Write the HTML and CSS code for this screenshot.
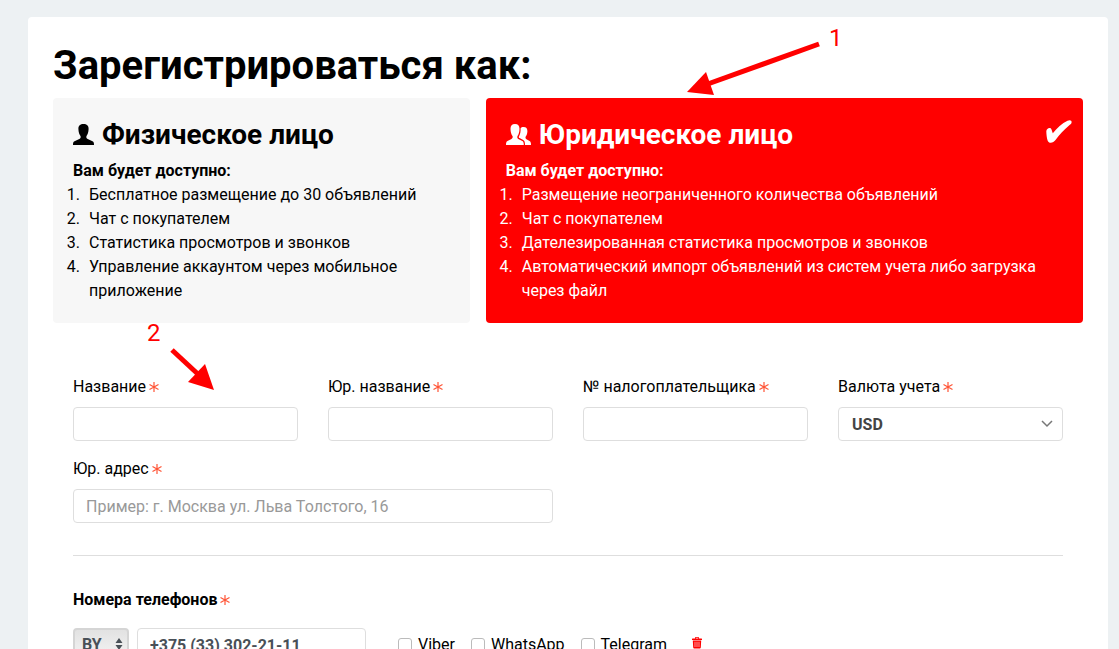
FILE: index.html
```html
<!DOCTYPE html>
<html lang="ru">
  <head>
    <meta charset="UTF-8" />
    <meta name="viewport" content="width=device-width, initial-scale=1.0" />
    <title>Регистрация</title>
    <link rel="stylesheet" href="styles.css">
  </head>
  <body>
    <form class="panel">
      <h1>Зарегистрироваться как:</h1>

      <div class="types">
        <section class="card">
          <input class="card-radio" type="radio" name="type" id="person" />
          <h2>
            <svg class="card-icon" width="21" height="22" viewBox="0 0 21 22">
              <path d="M10.500 0C7.200 0 5.300 1.500 5.400 5C5.500 8.500 6.400 10.500 7.500 12C8 13.500 7.500 14.300 6.300 14.900L1.500 17.300C.3 18 0 18.800 0 21H21C21 18.800 20.700 18 19.500 17.300L14.700 14.900C13.500 14.300 13 13.500 13.500 12C14.600 10.500 15.500 8.500 15.600 5C15.700 1.500 13.800 0 10.500 0Z" />
            </svg>
            <label for="person">Физическое лицо</label>
          </h2>
          <strong>Вам будет доступно:</strong>
          <ol>
            <li>Бесплатное размещение до 30 объявлений</li>
            <li>Чат с покупателем</li>
            <li>Статистика просмотров и звонков</li>
            <li>Управление аккаунтом через мобильное приложение</li>
          </ol>
        </section>

        <section class="card card-active">
          <input class="card-radio" type="radio" name="type" id="company" checked />
          <h2>
            <svg class="card-icon" width="25" height="22" viewBox="0 0 25 22">
              <path d="M9 0C5.800 0 4.400 1.700 4.500 5C4.600 8.200 5.300 10.300 6.500 12C7 13.500 6.500 14.300 5.500 14.900L1.500 17C.3 17.700 0 18.800 0 21H17.800C17.800 18.800 17.500 17.700 16.300 17L12.300 14.900C11.300 14.300 11 13.500 11.500 12C12.700 10.300 13.400 8.200 13.500 5C13.600 1.700 12.200 0 9 0Z" />
              <path d="M17.500 3C16.100 3 15.200 3.400 14.600 4.200C14.800 7.800 14.100 10.300 12.900 12.400C12.700 13.300 12.900 13.700 13.600 14.100L17.200 16C18.600 16.800 19 18.300 19 21H25C25 18.800 24.700 17.700 23.500 17L20.500 15.300C19.500 14.700 19.200 13.900 19.700 12.600C20.800 11 21.300 9.500 21.400 7.200C21.500 4.500 20.200 3 17.500 3Z" />
            </svg>
            <label for="company">Юридическое лицо</label>
            <svg class="card-check" width="26" height="24" viewBox="0 0 26 24">
              <path d="M.3 11.500C.2 8.500 4.300 6.800 5.400 9.300L6.800 13.200C11 8 16 3.500 21.500 .8C24 -.4 25.700 .4 25.600 2.200C25.500 3.600 24.600 4.200 23.300 5.300C18 9.800 13.500 14.500 9.500 20C7.500 22.800 3 24.200 1.600 20.400C.8 18 .4 14.500 .3 11.500Z" />
            </svg>
          </h2>
          <strong>Вам будет доступно:</strong>
          <ol>
            <li>Размещение неограниченного количества объявлений</li>
            <li>Чат с покупателем</li>
            <li>Дателезированная статистика просмотров и звонков</li>
            <li>Автоматический импорт объявлений из систем учета либо загрузка через файл</li>
          </ol>
        </section>
      </div>

      <div class="fields">
        <div class="field">
          <label for="name">Название <svg class="required" viewBox="0 0 10 10"><path d="M5 0V10M.5 2.500L9.500 7.500M9.500 2.500L.5 7.500" /></svg></label>
          <input class="control" type="text" id="name" />
        </div>
        <div class="field">
          <label for="legal-name">Юр. название <svg class="required" viewBox="0 0 10 10"><path d="M5 0V10M.5 2.500L9.500 7.500M9.500 2.500L.5 7.500" /></svg></label>
          <input class="control" type="text" id="legal-name" />
        </div>
        <div class="field">
          <label for="tax">№ налогоплательщика <svg class="required" viewBox="0 0 10 10"><path d="M5 0V10M.5 2.500L9.500 7.500M9.500 2.500L.5 7.500" /></svg></label>
          <input class="control" type="text" id="tax" />
        </div>
        <div class="field">
          <label for="currency">Валюта учета <svg class="required" viewBox="0 0 10 10"><path d="M5 0V10M.5 2.500L9.500 7.500M9.500 2.500L.5 7.500" /></svg></label>
          <div class="select">
            <select class="control" id="currency">
              <option>USD</option>
            </select>
            <svg class="chevron" width="12" height="8" viewBox="0 0 12 8"><path d="M1 1L6 6L11 1" /></svg>
          </div>
        </div>
        <div class="field field-wide">
          <label for="address">Юр. адрес <svg class="required" viewBox="0 0 10 10"><path d="M5 0V10M.5 2.500L9.500 7.500M9.500 2.500L.5 7.500" /></svg></label>
          <input class="control" type="text" id="address" placeholder="Пример: г. Москва ул. Льва Толстого, 16" />
        </div>
      </div>

      <div class="phones">
        <label class="phones-title" for="phone">Номера телефонов <svg class="required" viewBox="0 0 10 10"><path d="M5 0V10M.5 2.500L9.500 7.500M9.500 2.500L.5 7.500" /></svg></label>
        <div class="phone-row">
          <div class="select">
            <select class="control country" aria-label="Страна">
              <option>BY</option>
            </select>
            <svg class="sorter" width="8" height="12" viewBox="0 0 8 12"><path d="M4 0L7.500 5H.5ZM4 12L7.500 7H.5Z" /></svg>
          </div>
          <input class="control phone" type="tel" id="phone" value="+375 (33) 302-21-11" />
          <div class="messengers">
            <label><input type="checkbox" /> Viber</label>
            <label><input type="checkbox" /> WhatsApp</label>
            <label><input type="checkbox" /> Telegram</label>
            <button class="remove" type="button" aria-label="Удалить">
              <svg width="10" height="12" viewBox="0 0 10 12">
                <path fill-rule="evenodd" d="M3 1.500V.8Q3 0 3.800 0H6.200Q7 0 7 .8V1.500H9.500Q10 1.500 10 2V3H0V2Q0 1.500 .5 1.500ZM3.800 1.500H6.200V.8H3.800ZM.8 3.600H9.200L8.800 10.500Q8.700 11.500 7.800 11.500H2.200Q1.300 11.500 1.200 10.500ZM2.700 4.800V10H3.300V4.800ZM4.700 4.800V10H5.300V4.800ZM6.700 4.800V10H7.300V4.800Z" />
              </svg>
            </button>
          </div>
        </div>
      </div>
    </form>

    <!-- step hints over the form -->
    <svg class="arrow arrow-first" width="134" height="54" viewBox="0 0 134 54">
      <path d="M132 3L18 44" />
      <polygon points="0,51 19,31 27,54" />
    </svg>
    <span class="step step-first">1</span>
    <svg class="arrow arrow-second" width="46" height="44" viewBox="0 0 46 44">
      <path d="M2 2L30 28" />
      <polygon points="44,42 35,16 18,34" />
    </svg>
    <span class="step step-second">2</span>
  </body>
</html>
```
FILE: styles.css
```css
* {
  box-sizing: border-box;
}

body {
  position: relative;
  margin: 0;
  padding: 17px 11px 0 28px;
  background-color: #edf1f3;
  color: #000;
  font-family: Roboto, sans-serif;
  font-size: 16px;
  line-height: 24px;
}

.panel {
  padding: 25px;
  background-color: #fff;
  border-radius: 4px;
}

h1 {
  margin: 0 0 8px;
  font-size: 40px;
  line-height: 48px;
  font-weight: 700;
}

.types {
  display: grid;
  grid-template-columns: 30fr 43fr;
  gap: 16px;
}

.card {
  position: relative;
  padding: 21px 20px 20px;
  background-color: #f7f7f7;
  border-radius: 4px;
}

.card-active {
  background-color: #f00;
  color: #fff;
}

/* the radio covers the whole card */
.card-radio {
  position: absolute;
  inset: 0;
  width: 100%;
  height: 100%;
  margin: 0;
  opacity: 0;
  cursor: pointer;
}

.card h2 {
  display: flex;
  align-items: center;
  gap: 8px;
  margin: 0 0 8px;
  font-size: 28px;
  line-height: 32px;
  font-weight: 700;
}

.card-icon,
.card-check {
  fill: currentColor;
}

.card-check {
  position: absolute;
  top: 22px;
  right: 11px;
}

.card ol {
  margin: 0;
  padding-left: 11px;
}

.card li {
  padding-left: 5px;
}

.fields {
  display: grid;
  grid-template-columns: repeat(4, 1fr);
  gap: 16px 30px;
  margin: 52px 20px 0;
}

.field {
  display: flex;
  flex-direction: column;
  gap: 8px;
}

.field-wide {
  grid-column: span 2;
}

.required {
  width: 10px;
  height: 10px;
  margin-left: -1px;
  vertical-align: 0;
  fill: none;
  stroke: #ff5436;
  stroke-width: 1.2;
}

.control {
  width: 100%;
  height: 34px;
  padding: 0 12px;
  border: 1px solid #dedede;
  border-radius: 4px;
  background-color: #fff;
  color: #495057;
  font: inherit;
}

.control::placeholder {
  color: #999;
  opacity: 1;
}

.select {
  position: relative;
}

.select select {
  appearance: none;
  padding: 1px 13px 0;
  color: #444;
  font-weight: 700;
}

.chevron,
.sorter {
  position: absolute;
  pointer-events: none;
}

.chevron {
  top: 13px;
  right: 10px;
  fill: none;
  stroke: #777;
  stroke-width: 1.5;
}

.sorter {
  top: 10px;
  right: 6px;
  fill: #495057;
}

.phones {
  margin: 32px 20px 0;
  padding-top: 32px;
  border-top: 1px solid #dedede;
}

.phones-title {
  display: block;
  margin-bottom: 16px;
  font-weight: 700;
}

.phone-row {
  display: flex;
  align-items: center;
  gap: 8px;
}

.select .country {
  width: 56px;
  padding: 0 7px;
  border: 2px solid #d5d5d5;
  background-image: linear-gradient(#e2e2e2, #f5f5f5);
  color: #495057;
  font-weight: 700;
}

.phone {
  width: 229px;
  font-weight: 700;
}

.messengers {
  display: flex;
  align-items: center;
  gap: 16px;
  margin-left: 24px;
}

.messengers label {
  display: flex;
  align-items: center;
  gap: 6px;
}

.messengers input {
  appearance: none;
  width: 14px;
  height: 14px;
  margin: 0;
  border: 1px solid #bbb;
  border-radius: 3px;
  background-color: #fff;
}

.remove {
  display: flex;
  margin: 0 0 4px 9px;
  padding: 0;
  border: none;
  background: none;
  fill: #f00;
  cursor: pointer;
}

.arrow,
.step {
  position: absolute;
  pointer-events: none;
}

.arrow {
  fill: #f00;
  stroke: none;
}

.arrow path {
  stroke: #f00;
  stroke-width: 5;
}

.arrow-first {
  top: 41px;
  left: 687px;
}

.arrow-second {
  top: 348px;
  left: 170px;
}

.step {
  color: #f00;
  font-family: Roboto, sans-serif;
  font-size: 24px;
}

.step-first {
  top: 26px;
  left: 829px;
}

.step-second {
  top: 321px;
  left: 147px;
}
```
